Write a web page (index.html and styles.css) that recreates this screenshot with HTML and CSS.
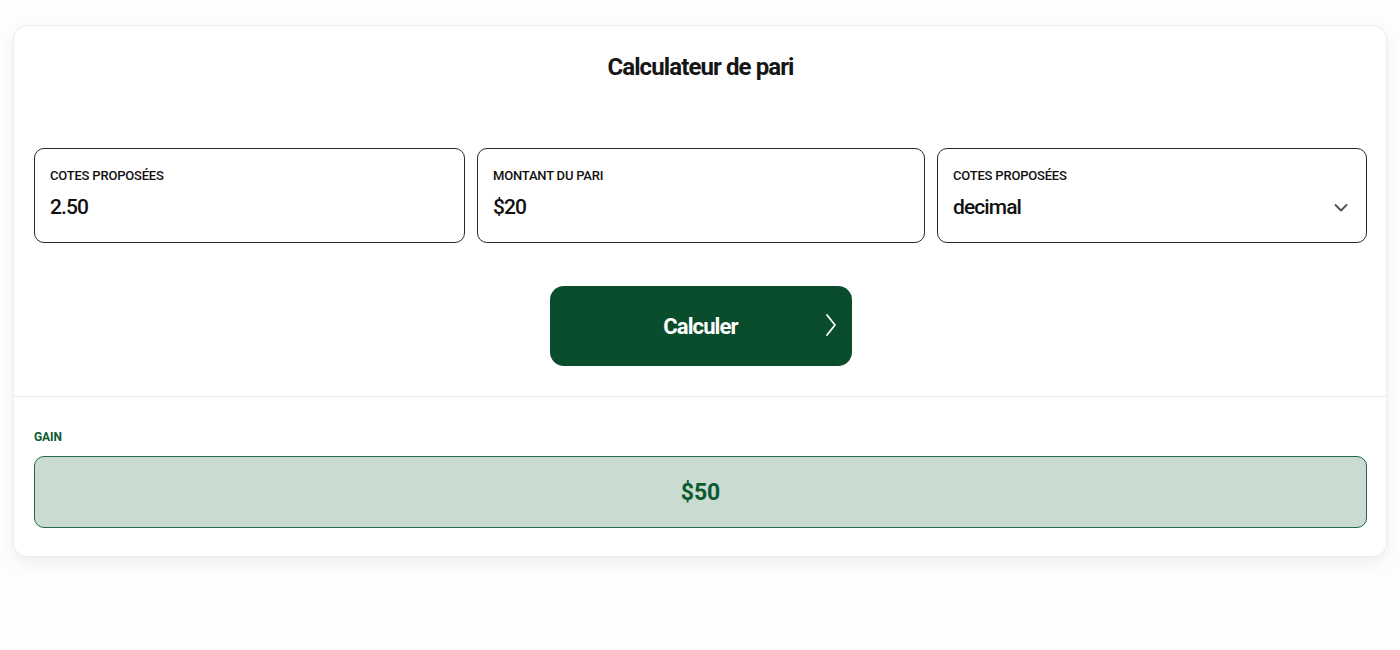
FILE: index.html
```html
<!DOCTYPE html>
<html lang="fr">
<head>
<meta charset="utf-8">
<title>Calculateur de pari</title>
<link rel="stylesheet" href="styles.css">
</head>
<body>
<div class="card">
  <div class="top">
    <h1 class="title">Calculateur de pari</h1>
    <div class="fields">
      <div class="field">
        <div class="label">COTES PROPOSÉES</div>
        <div class="value">2.50</div>
      </div>
      <div class="field">
        <div class="label">MONTANT DU PARI</div>
        <div class="value">$20</div>
      </div>
      <div class="field select">
        <div class="label">COTES PROPOSÉES</div>
        <div class="value">decimal</div>
        <svg class="chev" width="14" height="10" viewBox="0 0 14 10"><path d="M1.5 2 L7 7.5 L12.5 2" fill="none" stroke="#555" stroke-width="2" stroke-linecap="round" stroke-linejoin="round"/></svg>
      </div>
    </div>
    <div class="btn-row">
      <button class="btn"><span>Calculer</span>
        <svg class="btn-chev" width="12" height="24" viewBox="0 0 12 24"><path d="M2 2 L10 12 L2 22" fill="none" stroke="#fff" stroke-width="1.8" stroke-linecap="round" stroke-linejoin="round"/></svg>
      </button>
    </div>
  </div>
  <div class="bottom">
    <div class="gain-label">GAIN</div>
    <div class="result">$50</div>
  </div>
</div>
</body>
</html>
```

FILE: styles.css
```css
* { box-sizing: border-box; }
html, body { margin: 0; padding: 0; }
body {
  background: #fdfdfd;
  font-family: Roboto, "Liberation Sans", Arial, sans-serif;
  color: #111;
  padding: 25px 13px;
}
.card {
  background: #fff;
  border: 1px solid #ececec;
  border-radius: 14px;
  box-shadow: 0 6px 14px rgba(0,0,0,0.06);
  height: 532px;
}
.top {
  padding: 25px 19px 30px 20px;
  border-bottom: 1px solid #e6e6e6;
}
.title {
  margin: 0;
  text-align: center;
  font-size: 24px;
  font-weight: 700;
  letter-spacing: -0.9px;
  line-height: 32px;
  color: #161616;
}
.fields {
  display: grid;
  grid-template-columns: 431fr 448fr 430fr;
  gap: 12px;
  margin-top: 65px;
}
.field {
  position: relative;
  height: 95px;
  border: 1px solid #2a2a2a;
  border-radius: 10px;
  padding: 19px 15px 0;
}
.label {
  font-size: 13px;
  font-weight: 500;
  letter-spacing: -0.2px;
  line-height: 16px;
  color: #111;
}
.value {
  margin-top: 10px;
  font-size: 21px;
  font-weight: 500;
  letter-spacing: -0.9px;
  line-height: 26px;
  color: #111;
}
.chev {
  position: absolute;
  right: 18px;
  top: 54px;
}
.btn-row {
  display: flex;
  justify-content: center;
  margin-top: 43px;
}
.btn {
  position: relative;
  width: 302px;
  height: 80px;
  border: none;
  border-radius: 14px;
  background: #0a4d2c;
  color: #fff;
  font-family: inherit;
  font-size: 22px;
  font-weight: 700;
  letter-spacing: -0.9px;
  display: flex;
  align-items: center;
  justify-content: center;
}
.btn-chev {
  position: absolute;
  right: 15px;
  top: 27px;
}
.bottom {
  padding: 32px 19px 0 20px;
}
.gain-label {
  font-size: 12px;
  font-weight: 700;
  color: #0b5a30;
  letter-spacing: -0.1px;
  line-height: 16px;
}
.result {
  margin-top: 11px;
  height: 72px;
  border: 1px solid #1f6b47;
  border-radius: 10px;
  background: #cadcd2;
  color: #0b5a30;
  font-size: 23px;
  font-weight: 700;
  display: flex;
  align-items: center;
  justify-content: center;
}
```
